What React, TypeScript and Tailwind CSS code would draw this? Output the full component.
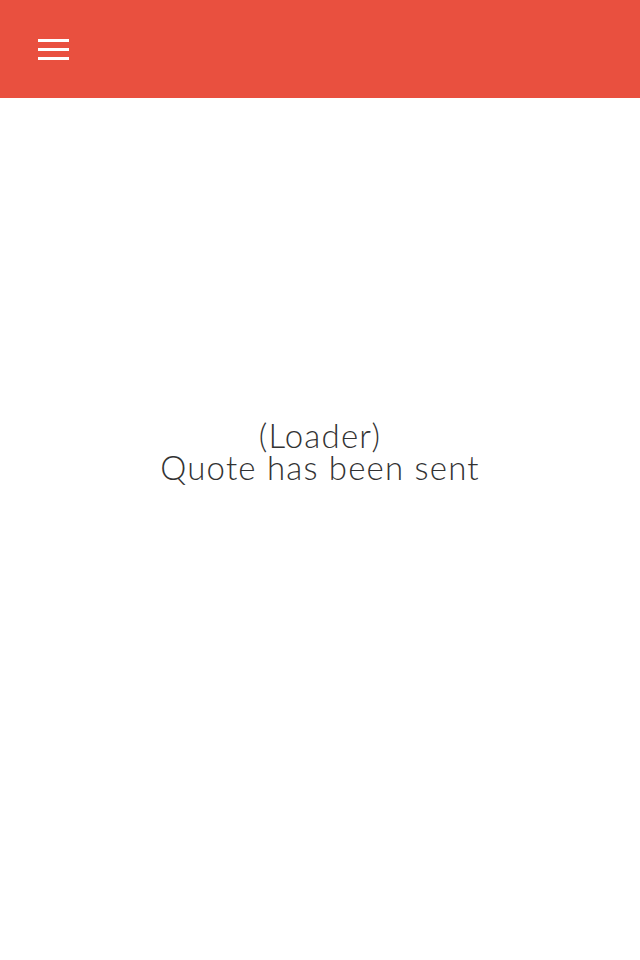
import React from 'react';

export default function App() {
  return (
    <div className="min-h-[960px] bg-white font-['Lato',sans-serif]">
      {/* Top bar */}
      <header className="h-[98px] bg-[#e9503f] flex items-center px-[38px]">
        <button className="flex flex-col gap-[6px] w-[31px]" aria-label="Menu">
          <span className="block h-[3px] w-full bg-white"></span>
          <span className="block h-[3px] w-full bg-white"></span>
          <span className="block h-[3px] w-full bg-white"></span>
        </button>
      </header>

      {/* Status */}
      <main className="pt-[321px] text-center text-[#333] font-light text-[33px] leading-[32px] tracking-[1.2px]">
        <p>(Loader)</p>
        <p>Quote has been sent</p>
      </main>
    </div>
  );
}
